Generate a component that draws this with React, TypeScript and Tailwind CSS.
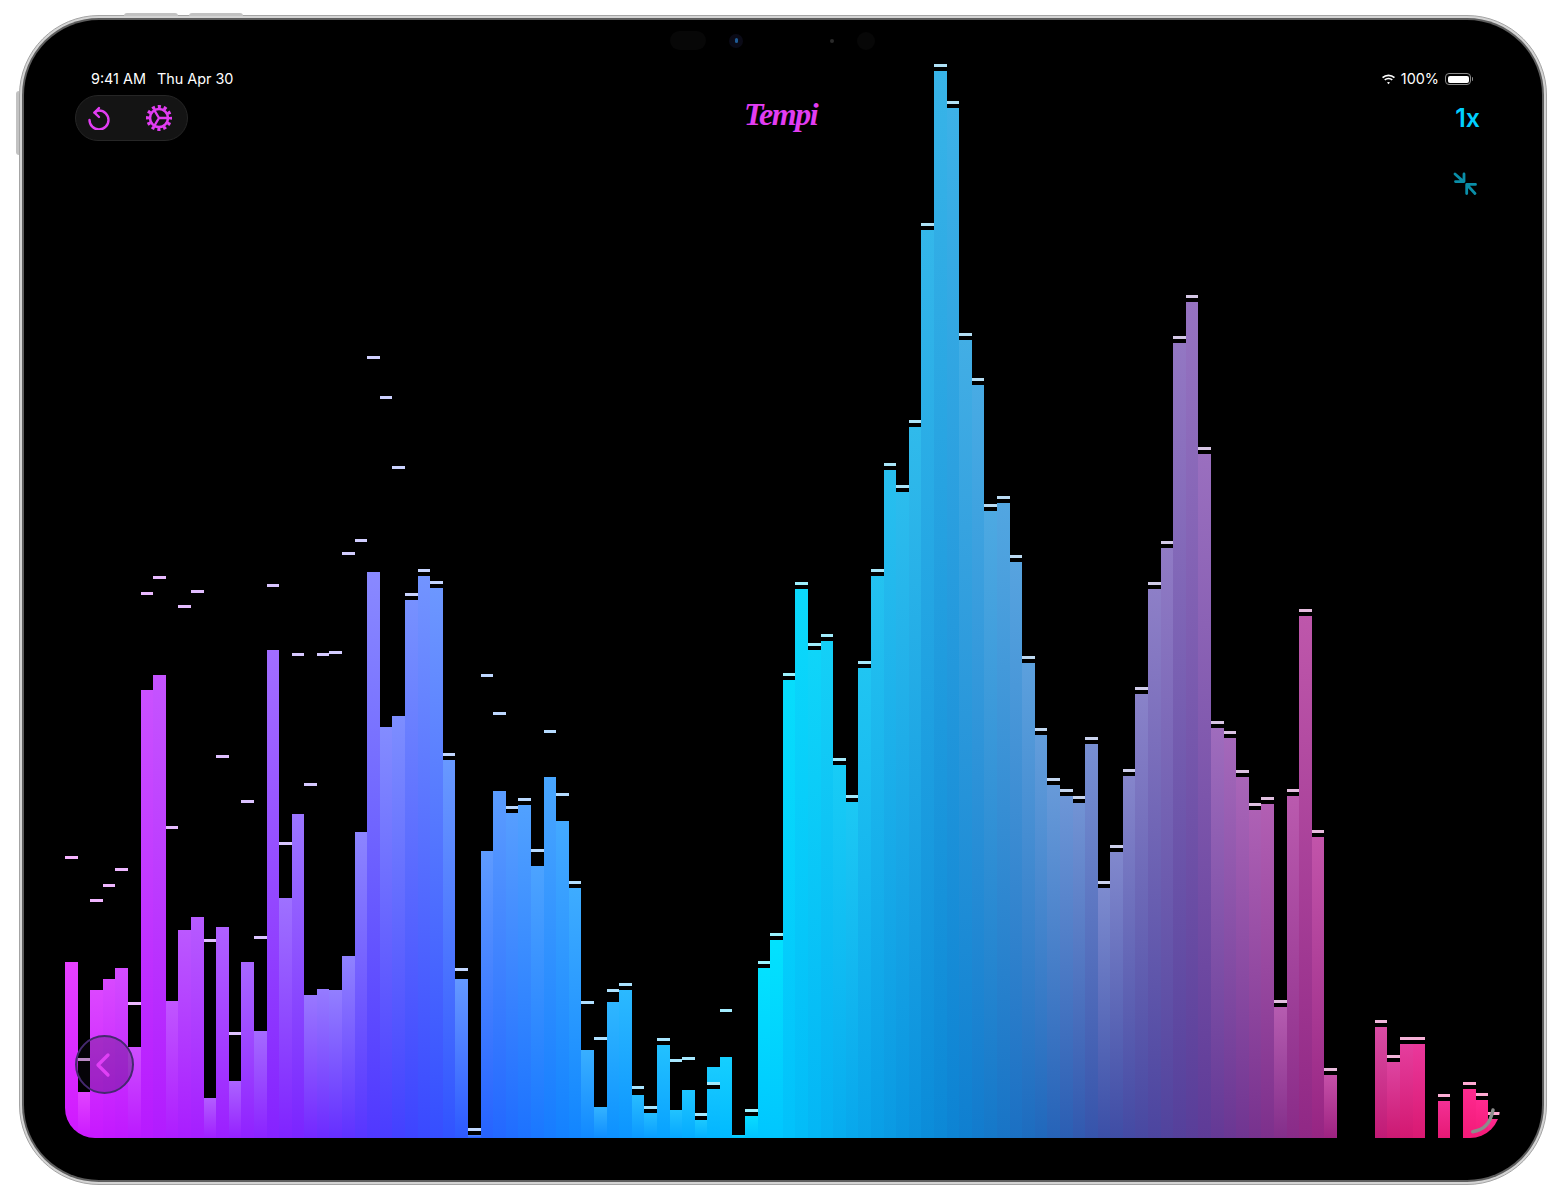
import { ChevronLeft } from "lucide-react";

// [bar top, peak cap] in page pixels, null = empty slot
const CHART_TOP = 60;
const CHART_BOTTOM = 1138;

const bars: ([number, number | null] | null)[] = [
  [962, 857], [1092, 1059], [990, 900], [979, 885], [968, 869], [1047, 1003], [690, 593], [675, 577],
  [1001, 827], [930, 606], [917, 591], [1098, 940], [927, 756], [1081, 1033], [962, 801], [1031, 937],
  [650, 585], [898, 843], [814, 654], [995, 784], [989, 654], [990, 652], [956, 553], [832, 540],
  [572, 357], [727, 397], [716, 467], [599, 594], [575, 570], [588, 582], [759, 754], [979, 969],
  [1134, 1129], [851, 675], [791, 713], [812, 807], [804, 799], [866, 850], [777, 731], [821, 794],
  [887, 882], [1050, 1002], [1107, 1038], [1002, 990], [990, 984], [1095, 1087], [1112, 1107], [1045, 1039],
  [1110, 1060], [1090, 1058], [1120, 1114], [1067, 1083], [1057, 1010], [1135, null], [1116, 1110], [968, 962],
  [940, 934], [680, 674], [588, 583], [650, 644], [640, 635], [764, 759], [802, 796], [668, 662],
  [575, 570], [470, 464], [491, 486], [427, 421], [229, 224], [71, 65], [108, 102], [339, 334],
  [385, 379], [511, 505], [503, 497], [562, 556], [662, 657], [735, 729], [784, 779], [795, 790],
  [802, 797], [743, 738], [887, 882], [852, 846], [775, 770], [694, 688], [588, 583], [547, 542],
  [343, 337], [302, 296], [453, 448], [727, 722], [738, 732], [777, 771], [809, 804], [803, 798],
  [1007, 1001], [796, 790], [615, 610], [836, 831], [1074, 1069], null, null, null,
  [1027, 1021], [1061, 1056], [1043, 1038], [1044, 1038], null, [1099, 1095], null, [1088, 1083],
  [1099, 1094], [1119, 1113],
];

type Stop = [number, number, number, number];

const hex = (x: number, c: string): Stop => [
  x,
  parseInt(c.slice(1, 3), 16),
  parseInt(c.slice(3, 5), 16),
  parseInt(c.slice(5, 7), 16),
];

const topStops: Stop[] = [
  hex(65, "#e840ff"), hex(140, "#cc50ff"), hex(203, "#b45cff"), hex(280, "#9f70ff"), hex(370, "#8a88ff"),
  hex(440, "#6a98ff"), hex(500, "#5a9cff"), hex(560, "#44a8ff"), hex(620, "#2cb8ff"), hex(720, "#18ccff"),
  hex(770, "#00e4ff"), hex(850, "#1cc8f4"), hex(940, "#38b4e8"), hex(1010, "#55a4e0"), hex(1060, "#6a98d8"),
  hex(1100, "#7c8cd0"), hex(1150, "#8c80c8"), hex(1200, "#9870c0"), hex(1260, "#b060b4"), hex(1300, "#bc58ac"),
  hex(1336, "#c850a8"), hex(1380, "#d84ca4"), hex(1412, "#e83a9c"), hex(1470, "#ff2a90"),
];

const bottomStops: Stop[] = [
  hex(65, "#d018ff"), hex(120, "#c018ff"), hex(200, "#a41eff"), hex(300, "#7a24ff"), hex(400, "#4240ff"),
  hex(470, "#2a5cff"), hex(560, "#1480ff"), hex(660, "#08a0ff"), hex(740, "#00c0ff"), hex(770, "#00c8ff"),
  hex(850, "#08a8ec"), hex(950, "#0c84d4"), hex(1040, "#2068bc"), hex(1100, "#3a50a8"), hex(1200, "#5c3c98"),
  hex(1290, "#882c88"), hex(1336, "#a02080"), hex(1400, "#d01870"), hex(1470, "#f41a78"),
];

function colorAt(stops: Stop[], x: number): [number, number, number] {
  let a = stops[0];
  let b = stops[stops.length - 1];
  for (let i = 0; i < stops.length - 1; i++) {
    if (x >= stops[i][0] && x <= stops[i + 1][0]) {
      a = stops[i];
      b = stops[i + 1];
      break;
    }
  }
  if (x > b[0]) a = b;
  const t = b[0] === a[0] ? 0 : Math.min(1, Math.max(0, (x - a[0]) / (b[0] - a[0])));
  return [
    a[1] + (b[1] - a[1]) * t,
    a[2] + (b[2] - a[2]) * t,
    a[3] + (b[3] - a[3]) * t,
  ];
}

const rgb = (c: number[]) => `rgb(${Math.round(c[0])},${Math.round(c[1])},${Math.round(c[2])})`;

function Bar({ index }: { index: number }) {
  const bar = bars[index];
  if (!bar) return <div className="h-full flex-1" />;
  const [top, cap] = bar;
  const x = 65 + index * 12.59 + 6;
  const t = colorAt(topStops, x);
  const b = colorAt(bottomStops, x);
  const pale = t.map((v) => v + (255 - v) * 0.6);
  return (
    <div className="relative flex h-full flex-1 flex-col justify-end">
      <div
        style={{
          height: CHART_BOTTOM - top,
          background: `linear-gradient(${rgb(t)}, ${rgb(b)})`,
        }}
      />
      {cap !== null && (
        <div className="absolute left-0 right-0 bg-black pb-[4px]" style={{ top: cap - CHART_TOP - 1 }}>
          <div className="h-[2.5px]" style={{ background: rgb(pale) }} />
        </div>
      )}
    </div>
  );
}

function UndoIcon() {
  return (
    <svg width="24" height="24" viewBox="0 0 24 24" fill="none" stroke="#e23df2" strokeWidth="2.4" strokeLinecap="round" strokeLinejoin="round">
      <path d="M12 2 7.5 6.6l4.500 4.400" />
      <path d="M7.500 6.600C9 5.200 10.400 4.500 12 4.500A9.500 9.500 0 1 1 2.500 14" />
    </svg>
  );
}

function GearIcon() {
  return (
    <svg width="28" height="28" viewBox="0 0 28 28" fill="none" stroke="#e23df2">
      <circle cx="14" cy="14" r="9" strokeWidth="2.600" />
      <circle cx="14" cy="14" r="11.400" strokeWidth="3.200" strokeDasharray="3.200 2.770" strokeDashoffset="1.600" />
      <path d="M14 14 22 14M14 14 9.500 6.500M14 14 9.500 21.500" strokeWidth="2.400" strokeLinecap="round" />
    </svg>
  );
}

function WifiIcon() {
  return (
    <svg width="15" height="11" viewBox="0 0 15 11" fill="#fff">
      <path d="M7.500 2.200c2.100 0 4 .8 5.400 2.100l1.100-1.200A9.600 9.600 0 0 0 7.500.5 9.600 9.600 0 0 0 1 3.100l1.100 1.200a7.900 7.900 0 0 1 5.400-2.100Z" />
      <path d="M7.500 5.300c1.200 0 2.300.5 3.200 1.200l1.100-1.200a6.400 6.400 0 0 0-8.600 0l1.100 1.200c.9-.7 2-1.200 3.200-1.200Z" />
      <path d="M7.500 8c-.6 0-1.100.2-1.500.6l1.500 1.700L9 8.600c-.4-.4-.9-.6-1.500-.6Z" />
    </svg>
  );
}

function CollapseIcon() {
  return (
    <svg width="24" height="24" viewBox="0 0 24 24" fill="none" stroke="#0a8ea8" strokeWidth="2.800" strokeLinecap="round" strokeLinejoin="round">
      <path d="M2 2 10.500 9.600M2.500 9.600h8.500V2" />
      <path d="M22 21.500 14 12.800M13.700 21.500v-9.100h8.800" />
    </svg>
  );
}

export default function App() {
  return (
    <div className="h-[1200px] w-full overflow-hidden bg-white pl-[19px] pt-[15px]" style={{ fontFamily: "Inter, 'Liberation Sans', sans-serif" }}>
      <div className="relative h-[1170px] w-[1528px]">
        {/* side buttons */}
        <div className="absolute -top-[2px] left-[105px] h-[3px] w-[54px] rounded-t-sm bg-[#c2c2c2]" />
        <div className="absolute -top-[2px] left-[170px] h-[3px] w-[54px] rounded-t-sm bg-[#c2c2c2]" />
        <div className="absolute left-[-3px] top-[76px] h-[64px] w-[3px] rounded-l-sm bg-[#c2c2c2]" />

        <div className="h-full rounded-[80px] border border-[#a4a4a4] bg-[#d4d4d4] p-[2px]">
          <div className="h-full rounded-[77px] bg-[#5e5e5e] p-[2px]">
            <div className="relative flex h-full flex-col overflow-hidden rounded-[75px] bg-black">
              {/* sensors */}
              <div className="absolute left-[646px] top-[11px] flex items-center">
                <div className="h-[19px] w-[36px] rounded-full bg-[#070707]" />
                <div className="ml-[23px] flex h-[14px] w-[14px] items-center justify-center rounded-full bg-[#0a0a16]">
                  <div className="h-[5px] w-[3px] rounded-full bg-[#1f5a94]" />
                </div>
                <div className="ml-[87px] h-[4px] w-[4px] rounded-full bg-[#2a2a2a]" />
                <div className="ml-[23px] h-[18px] w-[18px] rounded-full bg-[#070707]" />
              </div>

              {/* status bar */}
              <div className="mt-[50px] flex h-[18px] items-center justify-between pl-[67px] pr-[69px] text-[14.4px] leading-[18px] text-white">
                <div className="flex gap-[11px]">
                  <span>9:41 AM</span>
                  <span>Thu Apr 30</span>
                </div>
                <div className="flex items-center gap-[5px]">
                  <WifiIcon />
                  <span>100%</span>
                  <div className="ml-px flex items-center">
                    <div className="h-[12px] w-[26px] rounded-[4px] border border-[#8a8a8a] p-[1.5px]">
                      <div className="h-full rounded-[2px] bg-white" />
                    </div>
                    <div className="ml-px h-[4px] w-px rounded-r bg-[#8a8a8a]" />
                  </div>
                </div>
              </div>

              {/* controls */}
              <div className="relative z-10 mt-[7px] flex h-[46px] items-center pl-[51px] pr-[62px]">
                <div className="flex-1">
                  <div className="flex h-[46px] w-[113px] items-center gap-[34px] rounded-full border border-[#262626] bg-[#141414] pl-[11px]">
                    <UndoIcon />
                    <GearIcon />
                  </div>
                </div>
                <div
                  className="mb-[8px] ml-[6px] text-[32px] font-bold italic leading-none tracking-[-1.5px] text-[#e23df2]"
                  style={{ fontFamily: "'Liberation Serif', serif" }}
                >
                  Tempi
                </div>
                <div className="flex-1 text-right text-[25px] font-semibold leading-none text-[#00cfff]">1x</div>
              </div>

              <div className="relative z-10 mt-[31px] flex h-[24px] justify-end pr-[65px]">
                <CollapseIcon />
              </div>

              {/* spectrum */}
              <div className="relative -mt-[136px] ml-[41px] h-[1078px] w-[1435px]">
                <div className="flex h-full w-full overflow-hidden rounded-b-[30px]">
                  {bars.map((_, i) => (
                    <Bar key={i} index={i} />
                  ))}
                </div>

                <button className="absolute left-[10px] top-[975px] flex h-[59px] w-[59px] items-center justify-center rounded-full border-2 border-[#45296f] bg-[#140a20]/25">
                  <ChevronLeft size={40} strokeWidth={2} className="-ml-1 text-[#e040f5]" />
                </button>

                <svg className="absolute left-[1404px] top-[1046px]" width="30" height="30" viewBox="0 0 30 30" fill="none" stroke="#8c8c8c" strokeWidth="3.500" strokeLinecap="round">
                  <path d="M3.700 25.700C14 24 21 19 24 4" />
                </svg>
              </div>
            </div>
          </div>
        </div>
      </div>
    </div>
  );
}
